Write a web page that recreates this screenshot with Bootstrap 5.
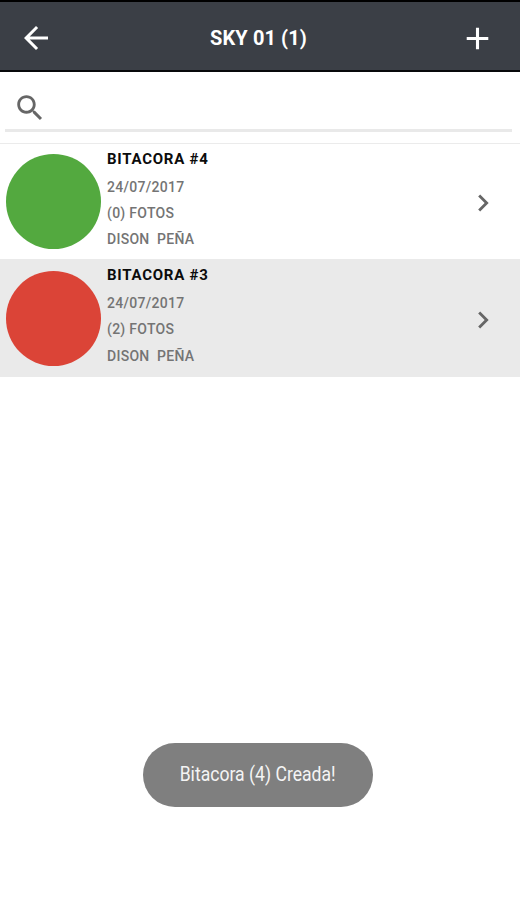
<!DOCTYPE html>
<html lang="es">
<head>
<meta charset="utf-8">
<meta name="viewport" content="width=device-width, initial-scale=1">
<title>SKY 01 (1)</title>
<link href="https://cdn.jsdelivr.net/npm/bootstrap@5.3.0/dist/css/bootstrap.min.css" rel="stylesheet">
<style>
body{font-family:Roboto,"Liberation Sans",sans-serif;height:900px;overflow:hidden;background:#fff}
svg{display:block;flex:none}
.topbar{height:72px;background:#3b3f46;border-top:2px solid #000;border-bottom:2px solid #08090b;padding:4px 24px 0 18px}
.topbar h1{font-size:20px;font-weight:700;line-height:24px;color:#fff;letter-spacing:.1px;padding-left:4px}
.searchbar{height:72px;padding:0 8px 0 5px;border-bottom:1px solid #ebebeb}
.field{height:60px;border-bottom:3px solid #e9e9e9;padding:19px 0 0 8px}
.entry{height:115px;padding:0 20px 0 6px}
.entry.alt{height:118px;background:#eaeaea}
.entry svg{margin-top:3px}
.dot{width:95px;height:95px;border-radius:50%;margin-right:6px;flex:none}
.dot.green{background:#53a93f}
.dot.red{background:#db4437}
.info{font-size:14px;font-weight:500;line-height:26.3px;color:#747474;letter-spacing:.28px;white-space:pre;padding-bottom:7px}
.info .heading{font-size:15px;font-weight:700;color:#0c0c0c;line-height:30px;letter-spacing:.75px}
.notice{width:230px;height:64px;background:#7f7f7f;border-radius:32px;color:#f4f4f4;font-size:20px;margin:0 147px 93px 143px;padding-bottom:2px}
.notice span{white-space:nowrap;transform:scaleX(.88)}
</style>
<script src="https://cdn.jsdelivr.net/npm/bootstrap@5.3.0/dist/js/bootstrap.bundle.min.js"></script>
</head>
<body class="d-flex flex-column">
<header class="topbar d-flex align-items-center justify-content-between">
  <svg width="36" height="36" viewBox="0 0 24 24" fill="#fff"><path d="M20 11H7.83l5.59-5.59L12 4l-8 8 8 8 1.41-1.41L7.83 13H20v-2z"/></svg>
  <h1 class="mb-0">SKY 01 (1)</h1>
  <svg width="37" height="37" viewBox="0 0 24 24" fill="#fff"><path d="M19 13h-6v6h-2v-6H5v-2h6V5h2v6h6v2z"/></svg>
</header>
<div class="searchbar">
  <div class="field">
    <svg width="34" height="34" viewBox="0 0 24 24" fill="#666"><path d="M15.5 14h-.79l-.28-.27C15.41 12.59 16 11.11 16 9.5 16 5.91 13.09 3 9.5 3S3 5.91 3 9.5 5.91 16 9.5 16c1.61 0 3.09-.59 4.23-1.57l.27.28v.79l5 4.99L20.49 19l-4.99-5zm-6 0C7.01 14 5 11.99 5 9.5S7.01 5 9.5 5 14 7.01 14 9.5 11.99 14 9.5 14z"/></svg>
  </div>
</div>
<main class="flex-grow-1">
  <div class="entry d-flex align-items-center">
    <div class="dot green"></div>
    <div class="info flex-grow-1"><div class="heading">BITACORA #4</div><div>24/07/2017</div><div>(0) FOTOS</div><div>DISON  PEÑA</div></div>
    <svg width="34" height="34" viewBox="0 0 24 24" fill="#666"><path d="M8.59 16.59 13.17 12 8.59 7.41 10 6l6 6-6 6z"/></svg>
  </div>
  <div class="entry alt d-flex align-items-center">
    <div class="dot red"></div>
    <div class="info flex-grow-1"><div class="heading">BITACORA #3</div><div>24/07/2017</div><div>(2) FOTOS</div><div>DISON  PEÑA</div></div>
    <svg width="34" height="34" viewBox="0 0 24 24" fill="#666"><path d="M8.59 16.59 13.17 12 8.59 7.41 10 6l6 6-6 6z"/></svg>
  </div>
</main>
<div class="notice d-flex align-items-center justify-content-center" role="status"><span>Bitacora (4) Creada!</span></div>
</body>
</html>
